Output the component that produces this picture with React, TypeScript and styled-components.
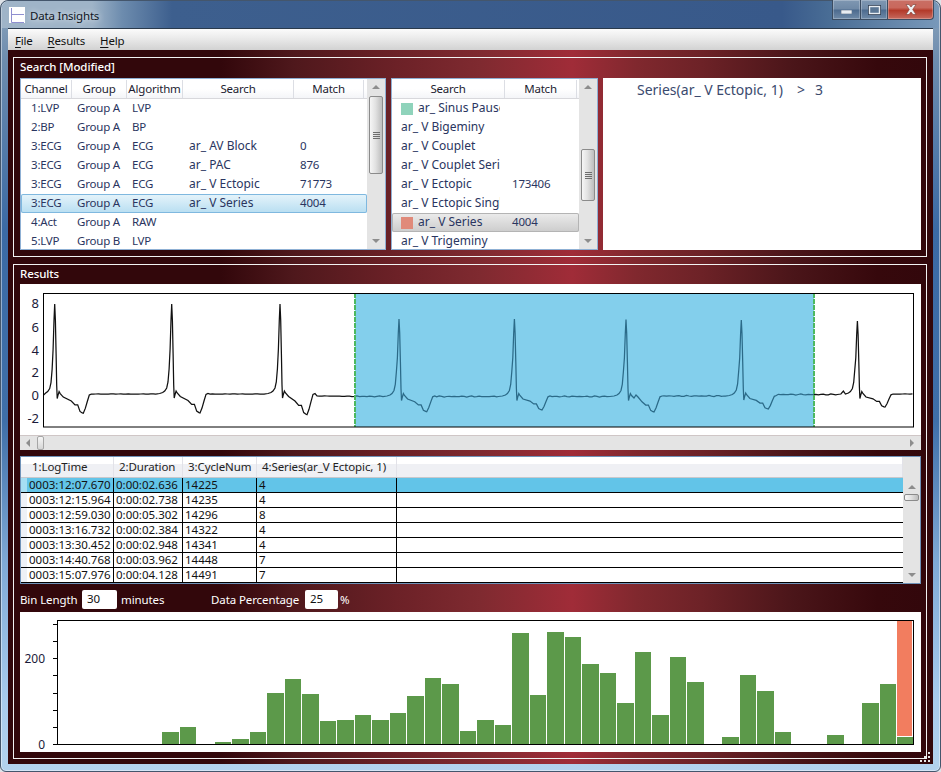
import React from "react";
import styled, { createGlobalStyle } from "styled-components";

const FONT = `"Noto Sans", "Open Sans", "DejaVu Sans", sans-serif`;

const Global = createGlobalStyle`
  html, body { margin: 0; padding: 0; background: #dfe3e8; }
  body { width: 941px; height: 772px; overflow: hidden; font-family: ${FONT}; }
  * { box-sizing: border-box; }
`;

const Window = styled.div`
  position: relative;
  width: 941px;
  height: 772px;
  padding: 0 7px 7px;
  display: flex;
  flex-direction: column;
  border-radius: 8px 8px 6px 6px;
  border: 1px solid #44566c;
  box-shadow: inset 0 0 0 1px rgba(255, 255, 255, 0.45);
  background: linear-gradient(180deg, #8ca4bc 0, #6d8cae 60px, #3b6aa5 230px, #3f6fa9 420px, #7fa9d5 560px, #a8cbec 700px, #b3d2ee 100%);
`;

const TitleBar = styled.div`
  height: 28px;
  margin: 0 -6px;
  padding: 6px 0 0 7px;
  display: flex;
  align-items: flex-start;
  gap: 5px;
  border-radius: 7px 7px 0 0;
  background: linear-gradient(90deg, #9fb4c8 0, #9fb4c8 90px, #6d8cae 120px, #3d5f8e 170px, #38598a 780px, #4a6e96 830px, #7a9abb 941px);
`;

const WindowTitle = styled.span`
  font-size: 11.5px;
  letter-spacing: -0.2px;
  line-height: 17px;
  color: #10161e;
  text-shadow: 0 0 6px #fff;
`;

const TitleButtons = styled.div`
  position: absolute;
  top: -1px;
  right: 6px;
  display: flex;
  height: 20px;
`;

const CaptionButton = styled.div<{ $close?: boolean; $w: number }>`
  width: ${(p) => p.$w}px;
  height: 20px;
  display: flex;
  align-items: center;
  justify-content: center;
  border: 1px solid #3b4c61;
  border-top: none;
  margin-right: ${(p) => (p.$close ? 0 : -1)}px;
  border-radius: ${(p) => (p.$close ? "0 0 4px 0" : "0")};
  box-shadow: inset 0 0 0 1px rgba(255, 255, 255, 0.25);
  background: ${(p) =>
    p.$close
      ? "linear-gradient(180deg, #c96f65 0, #c9685c 40%, #b33a2a 55%, #c66a5e 100%)"
      : "linear-gradient(180deg, #7f97b2 0, #6f89a6 48%, #4c6a8e 52%, #6f8aa8 100%)"};
`;

const MenuBar = styled.div`
  height: 22px;
  display: flex;
  align-items: center;
  gap: 15px;
  padding: 1px 0 0 7px;
  font-size: 11.5px;
  letter-spacing: -0.2px;
  color: #111;
  border-top: 1px solid #2a3a4c;
  background: linear-gradient(180deg, #fbfbfb 0, #ececec 40%, #d2d2d2 100%);
`;

const MenuItem = styled.span`
  & u { text-decoration: underline; text-underline-offset: 2px; }
`;

const Content = styled.div`
  flex: 1;
  display: flex;
  flex-direction: column;
  gap: 7px;
  padding: 7px 6px 5px 5px;
  background: linear-gradient(90deg, #32070b 0, #32070b 23%, #4f181c 31%, #6c2127 42%, #7f2a30 51%, #a02c38 61%, #80282e 68%, #6d2227 75%, #4a1519 85%, #36080c 94%, #32070b 100%);
`;

const Panel = styled.section<{ $h: number }>`
  height: ${(p) => p.$h}px;
  border: 1px solid #f2f2f2;
  padding: 0 5px 6px 6px;
  display: flex;
  flex-direction: column;
`;

const PanelTitle = styled.div<{ $h: number }>`
  height: ${(p) => p.$h}px;
  flex: none;
  font-size: 11.5px;
  letter-spacing: -0.1px;
  line-height: ${(p) => p.$h - 2}px;
  color: #fff;
  font-weight: 500;
`;

const SearchRow = styled.div`
  flex: 1;
  display: flex;
  gap: 5px;
  min-height: 0;
`;

const ListBox = styled.div<{ $w: number }>`
  width: ${(p) => p.$w}px;
  height: 172px;
  background: #fff;
  border: 1px solid #8fb0d4;
  display: flex;
  overflow: hidden;
`;

const ListBody = styled.div`
  flex: 1;
  min-width: 0;
  padding-top: 1px;
`;

const ListHeader = styled.div<{ $cols: string }>`
  height: 19px;
  display: grid;
  grid-template-columns: ${(p) => p.$cols};
  font-size: 11.5px;
  letter-spacing: -0.2px;
  color: #1c1c30;
  border-bottom: 1px solid #d8d8dc;
  background: linear-gradient(180deg, #fff 0, #fff 50%, #f4f5f8 100%);
`;

const HeaderCell = styled.div`
  display: flex;
  align-items: center;
  justify-content: center;
  padding-bottom: 1px;
  line-height: 17px;
  border-right: 1px solid #dcdee4;
  white-space: nowrap;
  overflow: hidden;
`;

const ListRow = styled.div<{ $cols: string; $sel?: "blue" | "gray" }>`
  height: 19px;
  display: grid;
  grid-template-columns: ${(p) => p.$cols};
  align-items: start;
  font-size: 11.5px;
  letter-spacing: -0.2px;
  color: #2a3560;
  border-radius: 2px;
  ${(p) =>
    p.$sel === "blue"
      ? "background: linear-gradient(180deg,#e6f4fb 0,#cfe9f6 50%,#b8def1 100%); box-shadow: inset 0 0 0 1px #7fb8df;"
      : p.$sel === "gray"
      ? "background: linear-gradient(180deg,#ececec 0,#dcdcdc 50%,#cccccc 100%); box-shadow: inset 0 0 0 1px #b4b4b4;"
      : ""}
`;

const Cell = styled.div<{ $pad: number; $max?: number; $name?: boolean }>`
  padding-left: ${(p) => p.$pad}px;
  ${(p) => (p.$max ? `max-width:${p.$max}px;` : "")}
  ${(p) => (p.$name ? "font-size:12px;letter-spacing:0;" : "")}
  white-space: nowrap;
  overflow: hidden;
  display: flex;
  align-items: center;
  height: 18px;
  padding-bottom: 1px;
`;

const Swatch = styled.span<{ $c: string }>`
  width: 12px;
  height: 12px;
  flex: none;
  margin: 2px 5px 0 0;
  background: ${(p) => p.$c};
`;

const VScroll = styled.div<{ $w: number }>`
  width: ${(p) => p.$w}px;
  flex: none;
  background: #e4e4e4;
  display: flex;
  flex-direction: column;
  align-items: center;
  padding: 6px 0;
`;

const Arrow = styled.span<{ $dir: "up" | "down" | "left" | "right"; $gap?: number }>`
  width: 0;
  height: 0;
  flex: none;
  ${(p) => (p.$gap ? `margin-top:${p.$gap}px;` : "")}
  ${(p) =>
    p.$dir === "up"
      ? "border-left:4px solid transparent;border-right:4px solid transparent;border-bottom:4px solid #8d8d8d;"
      : p.$dir === "down"
      ? "border-left:4px solid transparent;border-right:4px solid transparent;border-top:4px solid #8d8d8d;margin-top:auto;"
      : p.$dir === "left"
      ? "border-top:4px solid transparent;border-bottom:4px solid transparent;border-right:4px solid #8d8d8d;"
      : "border-top:4px solid transparent;border-bottom:4px solid transparent;border-left:4px solid #8d8d8d;margin-left:auto;"}
`;

const VThumb = styled.div<{ $top: number; $h: number; $w: number }>`
  margin-top: ${(p) => p.$top}px;
  width: ${(p) => p.$w}px;
  height: ${(p) => p.$h}px;
  flex: none;
  border: 1px solid #8b8b8b;
  border-radius: 2px;
  display: flex;
  flex-direction: column;
  align-items: center;
  justify-content: center;
  gap: 1px;
  background: linear-gradient(90deg, #f6f6f6 0, #e2e2e2 45%, #bdbdbd 100%);
`;

const Grip = styled.span`
  width: 7px;
  height: 1px;
  background: #6d6d6d;
`;

const QueryBox = styled.div`
  flex: 1;
  height: 172px;
  background: #fff;
  padding: 2px 0 0 34px;
  font-size: 14px;
  line-height: 20px;
  color: #3a4a6e;
  display: flex;
`;

const QueryExpr = styled.span<{ $w: number }>`
  width: ${(p) => p.$w}px;
  flex: none;
  white-space: nowrap;
`;

const ChartArea = styled.div`
  height: 151px;
  flex: none;
  background: #fff;
`;

const ChartSvg = styled.svg`
  display: block;
  font-family: ${FONT};
`;

const HScroll = styled.div`
  height: 15px;
  flex: none;
  display: flex;
  align-items: center;
  padding: 0 7px 0 6px;
  background: #e4e4e4;
  border-top: 1px solid #cfc6c6;
`;

const HThumb = styled.div`
  width: 7px;
  height: 14px;
  margin-left: 7px;
  border: 1px solid #a6a6a6;
  border-radius: 2px;
  background: linear-gradient(180deg, #f6f6f6 0, #d6d6d6 100%);
`;

const GridBox = styled.div`
  height: 128px;
  flex: none;
  margin-top: 6px;
  display: flex;
  border: 1px solid #6f92b8;
  background: #fff;
  overflow: hidden;
`;

const GridBody = styled.div`
  flex: 1;
  min-width: 0;
`;

const GridHeader = styled.div`
  height: 21px;
  display: flex;
  font-size: 11.5px;
  letter-spacing: -0.1px;
  color: #222;
  border-bottom: 1px solid #c8c8cc;
  background: linear-gradient(180deg, #fff 0, #fff 35%, #eff0f4 36%, #eff0f4 100%);
`;

const GridHeadCell = styled.div<{ $w?: number; $pad?: number }>`
  ${(p) => (p.$w ? `width:${p.$w}px;flex:none;` : "flex:1;")}
  padding-left: ${(p) => p.$pad ?? 5}px;
  line-height: 20px;
  border-right: 1px solid #e2e2e8;
  white-space: nowrap;
  overflow: hidden;
`;

const GridRow = styled.div<{ $sel?: boolean }>`
  height: 15px;
  display: flex;
  font-size: 11.5px;
  line-height: 14px;
  color: #111;
  border-bottom: 1px solid #000;
  background: ${(p) => (p.$sel ? "#62c4e8" : "#fff")};
`;

const RowHead = styled.div<{ $sel?: boolean }>`
  width: 6px;
  flex: none;
  background: ${(p) => (p.$sel ? "#a6def3" : "#eef1f6")};
`;

const GridCell = styled.div<{ $w?: number }>`
  ${(p) => (p.$w ? `width:${p.$w}px;flex:none;` : "flex:1;")}
  padding-left: 2px;
  border-right: 1px solid #000;
  white-space: nowrap;
  overflow: hidden;
`;

const GridEnd = styled.div`
  flex: 1;
`;

const Controls = styled.div`
  height: 28px;
  flex: none;
  display: flex;
  align-items: center;
  font-size: 11.5px;
  letter-spacing: -0.1px;
  color: #fff;
  padding-top: 3px;
`;

const ControlLabel = styled.span<{ $w: number }>`
  width: ${(p) => p.$w}px;
  flex: none;
  white-space: nowrap;
`;

const NumberBox = styled.div<{ $w: number; $mr: number }>`
  width: ${(p) => p.$w}px;
  height: 19px;
  flex: none;
  background: #fff;
  color: #111;
  border-radius: 2px;
  padding-left: 5px;
  line-height: 17px;
  margin-right: ${(p) => p.$mr}px;
`;

const HistArea = styled.div`
  height: 140px;
  flex: none;
  background: #fff;
`;

const Grab = styled.svg`
  position: absolute;
  right: 10px;
  bottom: 9px;
`;

/* ---------- data ---------- */

const colsA = "51px 55px 56px 111px 70px 1fr";
const rowsA = [
  ["1:LVP", "Group A", "LVP", "", ""],
  ["2:BP", "Group A", "BP", "", ""],
  ["3:ECG", "Group A", "ECG", "ar_ AV Block", "0"],
  ["3:ECG", "Group A", "ECG", "ar_ PAC", "876"],
  ["3:ECG", "Group A", "ECG", "ar_ V Ectopic", "71773"],
  ["3:ECG", "Group A", "ECG", "ar_ V Series", "4004"],
  ["4:Act", "Group A", "RAW", "", ""],
  ["5:LVP", "Group B", "LVP", "", ""],
];

const colsB = "113px 72px 1fr";
const rowsB: { n: string; m?: string; c?: string; sel?: boolean }[] = [
  { n: "ar_ Sinus Pause", c: "#8fd3bb" },
  { n: "ar_ V Bigeminy" },
  { n: "ar_ V Couplet" },
  { n: "ar_ V Couplet Series" },
  { n: "ar_ V Ectopic", m: "173406" },
  { n: "ar_ V Ectopic Single" },
  { n: "ar_ V Series", m: "4004", c: "#e08a7a", sel: true },
  { n: "ar_ V Trigeminy" },
];

const gridRows = [
  ["0003:12:07.670", "0:00:02.636", "14225", "4"],
  ["0003:12:15.964", "0:00:02.738", "14235", "4"],
  ["0003:12:59.030", "0:00:05.302", "14296", "8"],
  ["0003:13:16.732", "0:00:02.384", "14322", "4"],
  ["0003:13:30.452", "0:00:02.948", "14341", "4"],
  ["0003:14:40.768", "0:00:03.962", "14448", "7"],
  ["0003:15:07.976", "0:00:04.128", "14491", "7"],
  ["", "", "", ""],
];
const gridWidths = [87, 69, 74, 140];

/* ---------- ECG ---------- */

type Beat = { x: number; peak: number; base: number; tdx: number; ty: number; after?: number; bump?: boolean; hump?: boolean };
const beats: Beat[] = [
  { x: 54.7, peak: 304, base: 394.6, tdx: 28.6, ty: 413.3, after: 394 },
  { x: 171.7, peak: 304, base: 394, tdx: 28.3, ty: 413, after: 394 },
  { x: 280, peak: 304, base: 394, tdx: 27, ty: 414.7, after: 396 },
  { x: 399, peak: 319, base: 396.5, tdx: 27.7, ty: 411.7, after: 396.5 },
  { x: 514.4, peak: 319, base: 396.5, tdx: 27.6, ty: 410, after: 396.5 },
  { x: 626, peak: 319.5, base: 396.5, tdx: 28, ty: 412, after: 396, hump: true },
  { x: 741.3, peak: 320, base: 396, tdx: 27, ty: 409, after: 394.5 },
  { x: 857.4, peak: 321, base: 394.5, tdx: 27.6, ty: 407, after: 394, bump: true },
];

function buildEcg(): string {
  const pts: [number, number][] = [[43, 395.5]];
  const noise = (x: number) => Math.sin(x * 1.7) * 0.3 + Math.sin(x * 0.61) * 0.25;
  beats.forEach((b, i) => {
    const h = b.base - b.peak;
    const d = b.ty - b.base;
    const t = b.tdx;
    const rel: [number, number][] = [];
    if (b.bump) rel.push([-20, 0], [-16.5, -0.5], [-14, -3.5], [-12, -0.5]);
    else rel.push([-16, 0], [-12, -0.5]);
    rel.push(
      [-9, -1.5], [-7, -3], [-5, -6], [-3.7, -12], [-2.6, -25], [-1.6, -0.5 * h], [-0.7, -0.82 * h],
      [0, -h], [0.7, -0.82 * h], [1.4, -0.45 * h], [2, -0.1 * h], [2.5, 4], [3.2, 1], [4.4, -3], [5.5, -1]
    );
    if (b.hump) rel.push([8, 1.5], [10, -1.5], [12, 0.5]);
    else rel.push([8.6, 2.5]);
    rel.push(
      [t - 12, 0.34 * d], [t - 8.3, 0.55 * d], [t - 5.6, 0.55 * d], [t - 3.3, 0.9 * d], [t - 1, 0.98 * d], [t, d],
      [t + 2, 0.74 * d], [t + 4, 0.37 * d], [t + 6, 0.02 * d], [t + 8, -0.5]
    );
    rel.forEach(([dx, dy]) => {
      const x = b.x + dx;
      if (x > 43 && x < 915) pts.push([x, b.base + dy]);
    });
    const a = b.after ?? b.base;
    const start = b.x + t + 10;
    const next = i + 1 < beats.length ? beats[i + 1] : null;
    const end = next ? next.x - (next.bump ? 21 : 17) : 915;
    for (let x = start; x < end; x += 2.5) {
      const f = (x - start) / Math.max(1, end - start);
      const blue = x > 355 && x < 860;
      const base = a + (next ? (next.base - a) * f : 0);
      pts.push([x, base + noise(x) * (blue ? 1 : 0.4)]);
    }
  });
  return pts.map((p, i) => `${i ? "L" : "M"}${p[0].toFixed(1)} ${p[1].toFixed(1)}`).join("");
}

const ECG = buildEcg();

const ChartPlot = () => (
  <ChartSvg width={901} height={151} viewBox="20 284 901 151">
    <defs>
      <clipPath id="plotClip"><rect x={44} y={294} width={869} height={133} /></clipPath>
      <clipPath id="selClip"><rect x={355} y={294} width={459} height={133} /></clipPath>
    </defs>
    <path d={ECG} fill="none" stroke="#111" strokeWidth={1.25} clipPath="url(#plotClip)" />
    <rect x={355} y={294} width={459} height={133} fill="#83cfec" />
    <path d={ECG} fill="none" stroke="#2b6a88" strokeWidth={1.25} clipPath="url(#selClip)" />
    <line x1={355} y1={293} x2={355} y2={427} stroke="#4db860" strokeWidth={2} strokeDasharray="5 1" />
    <line x1={814} y1={293} x2={814} y2={427} stroke="#4db860" strokeWidth={2} strokeDasharray="5 1" />
    <rect x={43.5} y={293.5} width={870} height={133.5} fill="none" stroke="#000" strokeWidth={1} />
    {[["8", 303], ["6", 327], ["4", 349.6], ["2", 372], ["0", 394.5], ["-2", 417.5]].map(([t, y]) => (
      <text key={t} x={39} y={(y as number) + 5} textAnchor="end" fontSize={13} fill="#1a1a3a">{t}</text>
    ))}
  </ChartSvg>
);

const heights: Record<number, number> = {
  6: 12, 7: 17, 9: 2, 10: 5, 11: 12, 12: 51, 13: 65, 14: 50, 15: 23, 16: 24, 17: 29, 18: 24, 19: 31, 20: 48, 21: 66, 22: 60,
  23: 13, 24: 24, 25: 19, 26: 111, 27: 49, 28: 112, 29: 107, 30: 80, 31: 71, 32: 41, 33: 92, 34: 29, 35: 87, 36: 62,
  38: 7, 39: 69, 40: 53, 41: 12, 44: 9, 46: 41, 47: 60, 48: 7,
};

const HistPlot = () => (
  <ChartSvg width={901} height={140} viewBox="20 612 901 140">
    <g shapeRendering="crispEdges">
      {Object.entries(heights).map(([k, h]) => {
        const n = Number(k);
        const x = 57 + 17.5 * n;
        const x0 = Math.ceil(x);
        const x1 = Math.ceil(x + 17.5) - 1;
        return <rect key={k} x={x0} y={744 - h} width={x1 - x0} height={h} fill="#5c994a" />;
      })}
      <rect x={897} y={621} width={15} height={115} fill="#f27d5f" />
      <rect x={57.5} y={620.5} width={856} height={123.5} fill="none" stroke="#000" strokeWidth={1} />
      {[744, 727, 710, 693, 675, 658, 641, 624].map((y) => (
        <line key={y} x1={53} x2={57} y1={y + 0.5} y2={y + 0.5} stroke="#000" />
      ))}
    </g>
    <text x={45} y={663} textAnchor="end" fontSize={12} fill="#1a1a3a">200</text>
    <text x={45} y={749} textAnchor="end" fontSize={12} fill="#1a1a3a">0</text>
  </ChartSvg>
);

const AppIcon = () => (
  <svg width={16} height={16} viewBox="0 0 16 16" style={{ flex: "none" }}>
    <rect width={16} height={16} fill="#fff" />
    <path d="M2.5 1V15.5M2.5 7.5H15M2.5 15.5H15" stroke="#8f8fd0" strokeWidth={1} fill="none" />
  </svg>
);

export default function App() {
  return (
    <>
      <Global />
      <Window>
        <TitleBar>
          <AppIcon />
          <WindowTitle>Data Insights</WindowTitle>
        </TitleBar>
        <TitleButtons>
          <CaptionButton $w={29}>
            <svg width={11} height={4} style={{ marginTop: 5 }}><rect width={11} height={4} fill="#e8edf2" stroke="#3a4a60" strokeWidth={0.5} /></svg>
          </CaptionButton>
          <CaptionButton $w={28}>
            <svg width={13} height={10}><rect x={0.5} y={0.5} width={12} height={9} fill="#5a7694" stroke="#2f3d50" /><rect x={1.5} y={1.5} width={10} height={7} fill="none" stroke="#e8edf2" strokeWidth={1.4} /></svg>
          </CaptionButton>
          <CaptionButton $w={47} $close>
            <svg width={12} height={11} viewBox="0 0 12 11"><path d="M1 0.5H4L6 3L8 0.5H11L7.7 5.5L11 10.5H8L6 8L4 10.5H1L4.3 5.5Z" fill="#eef0f2" stroke="#7a3a30" strokeWidth={0.6} /></svg>
          </CaptionButton>
        </TitleButtons>
        <MenuBar>
          <MenuItem><u>F</u>ile</MenuItem>
          <MenuItem><u>R</u>esults</MenuItem>
          <MenuItem><u>H</u>elp</MenuItem>
        </MenuBar>
        <Content>
          <Panel $h={200}>
            <PanelTitle $h={20}>Search [Modified]</PanelTitle>
            <SearchRow>
              <ListBox $w={366}>
                <ListBody>
                  <ListHeader $cols={colsA}>
                    {["Channel", "Group", "Algorithm", "Search", "Match"].map((h) => (
                      <HeaderCell key={h}>{h}</HeaderCell>
                    ))}
                  </ListHeader>
                  {rowsA.map((r, i) => (
                    <ListRow key={i} $cols={colsA} $sel={i === 5 ? "blue" : undefined}>
                      <Cell $pad={10}>{r[0]}</Cell>
                      <Cell $pad={5}>{r[1]}</Cell>
                      <Cell $pad={5}>{r[2]}</Cell>
                      <Cell $pad={6} $name>{r[3]}</Cell>
                      <Cell $pad={6}>{r[4]}</Cell>
                    </ListRow>
                  ))}
                </ListBody>
                <VScroll $w={18}>
                  <Arrow $dir="up" />
                  <VThumb $top={7} $w={14} $h={78}><Grip /><Grip /><Grip /><Grip /></VThumb>
                  <Arrow $dir="down" />
                </VScroll>
              </ListBox>
              <ListBox $w={207}>
                <ListBody>
                  <ListHeader $cols={colsB}>
                    <HeaderCell>Search</HeaderCell>
                    <HeaderCell>Match</HeaderCell>
                  </ListHeader>
                  {rowsB.map((r) => (
                    <ListRow key={r.n} $cols={colsB} $sel={r.sel ? "gray" : undefined}>
                      <Cell $pad={9} $max={108} $name>
                        {r.c && <Swatch $c={r.c} />}
                        {r.n}
                      </Cell>
                      <Cell $pad={7}>{r.m}</Cell>
                    </ListRow>
                  ))}
                </ListBody>
                <VScroll $w={18}>
                  <Arrow $dir="up" />
                  <VThumb $top={60} $w={14} $h={52}><Grip /><Grip /><Grip /><Grip /></VThumb>
                  <Arrow $dir="down" />
                </VScroll>
              </ListBox>
              <QueryBox>
                <QueryExpr $w={160}>Series(ar_ V Ectopic, 1)</QueryExpr>
                <QueryExpr $w={18}>&gt;</QueryExpr>
                <QueryExpr $w={20}>3</QueryExpr>
              </QueryBox>
            </SearchRow>
          </Panel>
          <Panel $h={495}>
            <PanelTitle $h={19}>Results</PanelTitle>
            <ChartArea><ChartPlot /></ChartArea>
            <HScroll>
              <Arrow $dir="left" />
              <HThumb />
              <Arrow $dir="right" />
            </HScroll>
            <GridBox>
              <GridBody>
                <GridHeader>
                  <GridHeadCell $w={93} $pad={11}>1:LogTime</GridHeadCell>
                  <GridHeadCell $w={69}>2:Duration</GridHeadCell>
                  <GridHeadCell $w={74}>3:CycleNum</GridHeadCell>
                  <GridHeadCell $w={140}>4:Series(ar_V Ectopic, 1)</GridHeadCell>
                  <GridHeadCell />
                </GridHeader>
                {gridRows.map((r, i) => (
                  <GridRow key={i} $sel={i === 0}>
                    <RowHead $sel={i === 0} />
                    {r.map((c, j) => (
                      <GridCell key={j} $w={gridWidths[j]}>{c}</GridCell>
                    ))}
                    <GridEnd />
                  </GridRow>
                ))}
              </GridBody>
              <VScroll $w={17}>
                <Arrow $dir="up" $gap={22} />
                <VThumb $top={5} $w={15} $h={7} />
                <Arrow $dir="down" />
              </VScroll>
            </GridBox>
            <Controls>
              <ControlLabel $w={62}>Bin Length</ControlLabel>
              <NumberBox $w={35} $mr={4}>30</NumberBox>
              <ControlLabel $w={90}>minutes</ControlLabel>
              <ControlLabel $w={94}>Data Percentage</ControlLabel>
              <NumberBox $w={33} $mr={2}>25</NumberBox>
              <span>%</span>
            </Controls>
            <HistArea><HistPlot /></HistArea>
          </Panel>
        </Content>
        <Grab width={12} height={12} viewBox="0 0 12 12">
          {[[10, 0], [10, 4], [6, 4], [10, 8], [6, 8], [2, 8]].map(([x, y]) => (
            <rect key={`${x}-${y}`} x={x} y={y + 2} width={2} height={2} fill="#e8e8e8" />
          ))}
        </Grab>
      </Window>
    </>
  );
}
